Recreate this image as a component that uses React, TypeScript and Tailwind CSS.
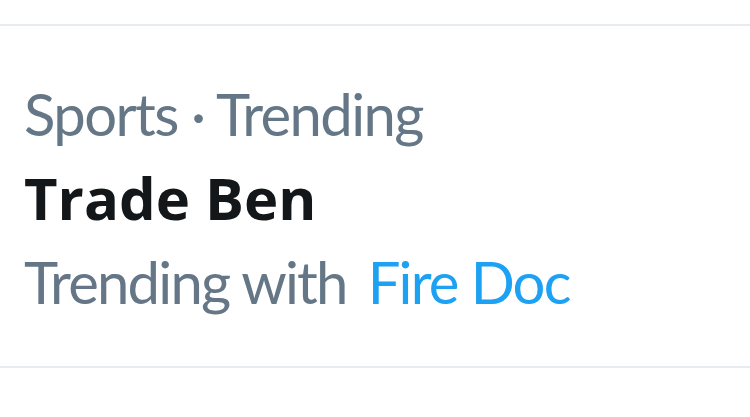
export default function App() {
  return (
    <div className="w-[750px] h-[417px] bg-white overflow-hidden pt-[24px]" style={{ fontFamily: 'Lato, "Open Sans", sans-serif' }}>
      <div className="border-y-2 border-[#e6ecf0] h-[344px] pl-[24px] pt-[46px]">
        <div className="text-[58px] leading-[84px] tracking-[-1.6px] text-[#657786] whitespace-nowrap">Sports · Trending</div>
        <div className="text-[58px] leading-[84px] font-bold text-[#14171a] whitespace-nowrap font-['Open_Sans']">Trade Ben</div>
        <div className="text-[58px] leading-[84px] tracking-[-1.8px] text-[#657786] whitespace-nowrap">
          Trending with <span className="text-[#1da1f2] ml-2">Fire Doc</span>
        </div>
      </div>
    </div>
  );
}
